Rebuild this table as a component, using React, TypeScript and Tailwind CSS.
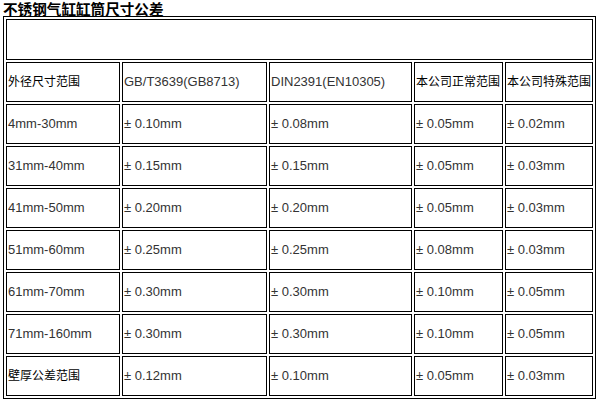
const rows: [string, string, string, string, string][] = [
  ['4mm-30mm', '± 0.10mm', '± 0.08mm', '± 0.05mm', '± 0.02mm'],
  ['31mm-40mm', '± 0.15mm', '± 0.15mm', '± 0.05mm', '± 0.03mm'],
  ['41mm-50mm', '± 0.20mm', '± 0.20mm', '± 0.05mm', '± 0.03mm'],
  ['51mm-60mm', '± 0.25mm', '± 0.25mm', '± 0.08mm', '± 0.03mm'],
  ['61mm-70mm', '± 0.30mm', '± 0.30mm', '± 0.10mm', '± 0.05mm'],
  ['71mm-160mm', '± 0.30mm', '± 0.30mm', '± 0.10mm', '± 0.05mm'],
];

const cell = 'border border-black p-0 pl-px h-[40px] align-middle text-left font-normal';
const cjk = 'text-[12px]';

export default function App() {
  return (
    <div className="w-[599px] h-[402px] bg-white text-[#333] font-['Liberation_Sans','Noto_Sans_CJK_SC',sans-serif] text-[13px]">
      <h1 className="pl-[3px] pt-[1px] h-[16px] leading-[15px] text-[14.6px] font-bold text-black font-['Noto_Sans_CJK_SC',sans-serif]">
        不锈钢气缸缸筒尺寸公差
      </h1>
      <table className="ml-[3px] w-[593px] border border-black border-separate border-spacing-[2px] table-fixed">
        <colgroup>
          <col className="w-[114px]" />
          <col className="w-[145px]" />
          <col className="w-[143px]" />
          <col className="w-[89px]" />
          <col className="w-[88px]" />
        </colgroup>
        <tbody>
          <tr>
            <td colSpan={5} className="border border-black h-[41px] p-0"></td>
          </tr>
          <tr>
            <td className={`${cell} ${cjk} text-black`}>外径尺寸范围</td>
            <td className={cell}>GB/T3639(GB8713)</td>
            <td className={cell}>DIN2391(EN10305)</td>
            <td className={`${cell} ${cjk} text-black whitespace-nowrap`}>本公司正常范围</td>
            <td className={`${cell} ${cjk} text-black whitespace-nowrap`}>本公司特殊范围</td>
          </tr>
          {rows.map((r) => (
            <tr key={r[0]}>
              {r.map((v, i) => (
                <td key={i} className={cell}>
                  {v}
                </td>
              ))}
            </tr>
          ))}
          <tr>
            <td className={`${cell} ${cjk} text-black`}>壁厚公差范围</td>
            <td className={cell}>± 0.12mm</td>
            <td className={cell}>± 0.10mm</td>
            <td className={cell}>± 0.05mm</td>
            <td className={cell}>± 0.03mm</td>
          </tr>
        </tbody>
      </table>
    </div>
  );
}
